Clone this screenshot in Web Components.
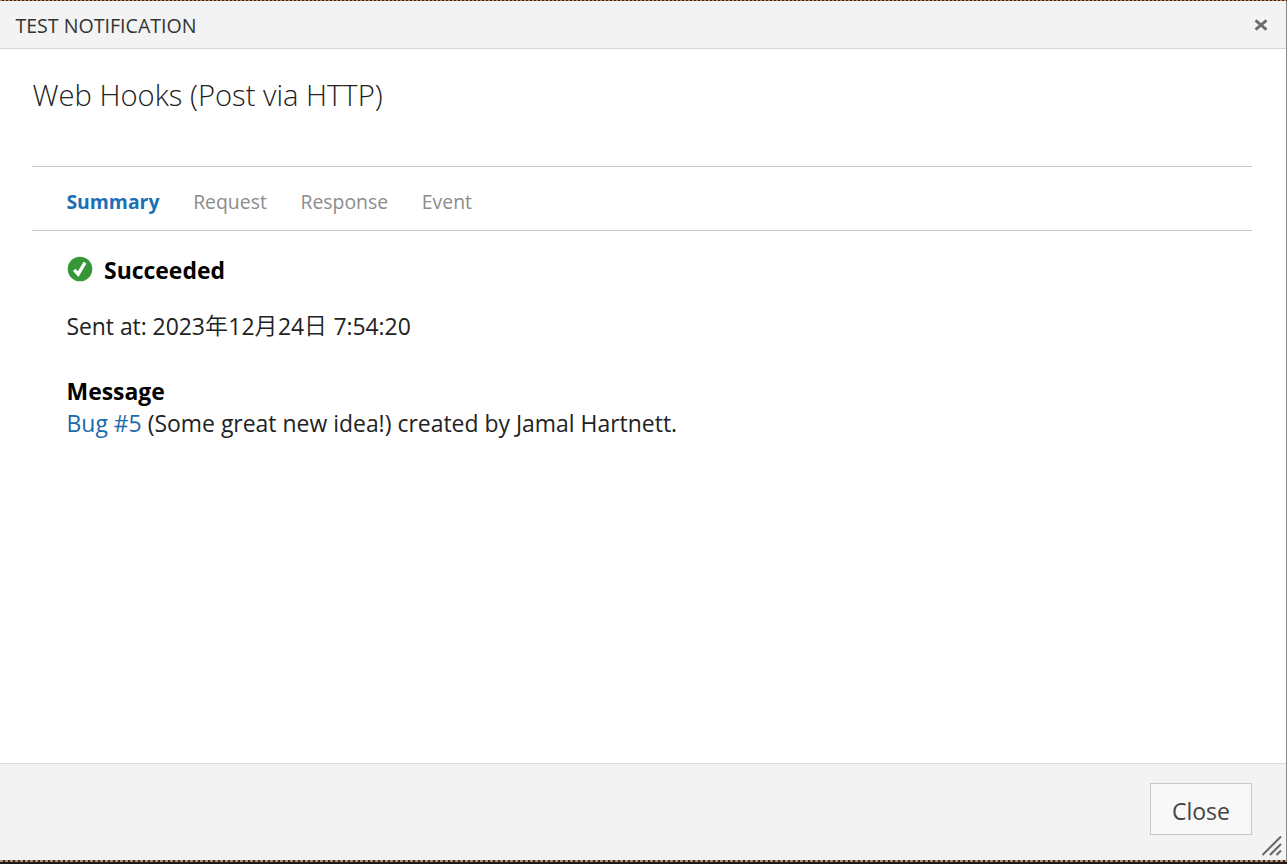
<!DOCTYPE html>
<html lang="en"><head><meta charset="utf-8"><title>Test notification</title>
<style>
html,body{margin:0;height:100%;overflow:hidden;background:#fff}
body{font-family:"Open Sans","Noto Sans CJK JP",sans-serif;color:#333}
a{color:#1c69ac;text-decoration:none}
.jp{font-weight:350;vertical-align:1px;line-height:1;letter-spacing:.5px}
</style></head><body>
<notification-dialog>
<span slot="title">TEST NOTIFICATION</span>
<span slot="heading">Web Hooks (Post via HTTP)</span>
<tab-bar slot="tabs"><tab-item selected>Summary</tab-item><tab-item>Request</tab-item><tab-item>Response</tab-item><tab-item>Event</tab-item></tab-bar>
<result-summary><span slot="status">Succeeded</span><span slot="sent">Sent at: 2023<span class="jp">年</span>12<span class="jp">月</span>24<span class="jp">日</span> 7:54:20</span><span slot="label">Message</span><span slot="message"><a href="#">Bug #5</a> (Some great new idea!) created by Jamal Hartnett.</span></result-summary>
<dialog-button slot="actions">Close</dialog-button>
</notification-dialog>
<script>
const define=(name,html)=>customElements.define(name,class extends HTMLElement{
  constructor(){super();this.attachShadow({mode:'open'}).innerHTML=html;}
});
define('status-icon',`<style>:host{display:block;width:26px;height:26px}svg{display:block}</style>
<svg width="26" height="26" viewBox="0 0 26 26"><circle cx="13" cy="13" r="12.3" fill="#379637"/><path d="M7.2 13.8 L11.2 18.2 L18 6.6" fill="none" stroke="#fff" stroke-width="3.3"/></svg>`);
define('tab-item',`<style>:host{display:block;font-size:19.4px;line-height:30px;color:#8c8c8c}:host([selected]){font-weight:700;color:#1b6fb5}</style><slot></slot>`);
define('tab-bar',`<style>:host{display:flex;gap:33.7px;box-sizing:border-box;height:65px;padding:20px 0 0 34.4px;border-top:1px solid #c8c8c8;border-bottom:1px solid #c8c8c8}</style><slot></slot>`);
define('result-summary',`<style>:host{display:block;padding:23px 0 0 34.5px;font-size:22.95px;line-height:32px;color:#222}
.status{display:flex;gap:11px;margin-bottom:24px;font-weight:700;color:#000}status-icon{margin:2px 0 0 .5px}
.label{margin-top:33px;font-weight:700;color:#000}.label,.sent,.message{height:32px;white-space:nowrap}.sent{letter-spacing:-.05px}</style>
<div class="status"><status-icon></status-icon><slot name="status"></slot></div>
<div class="sent"><slot name="sent"></slot></div><div class="label"><slot name="label"></slot></div><div class="message"><slot name="message"></slot></div>`);
define('dialog-button',`<style>:host{display:block}button{box-sizing:border-box;width:102px;height:52px;margin:0;padding:3px 0 0;border:1px solid #c8c8c8;background:#f8f8f8;color:#444;font:23px/32px "Open Sans",sans-serif}</style><button><slot></slot></button>`);
define('close-icon',`<style>:host{display:block}svg{display:block}</style><svg width="14" height="12" viewBox="0 0 14 12"><path d="M1.5 1.4L12.5 10.6M12.5 1.4L1.5 10.6" stroke="#6c6c6c" stroke-width="2.8" fill="none"/></svg>`);
define('resize-grip',`<style>:host{display:block}svg{display:block}</style><svg width="22" height="22" viewBox="0 0 22 22"><path d="M1.5 20L20 1.5M9 20L20 9M15.5 20L20 15.5" stroke="#666" stroke-width="2" fill="none"/></svg>`);
define('notification-dialog',`<style>
:host{display:flex;flex-direction:column;box-sizing:border-box;width:1287px;height:864px;background:#fff}
.edge-top{height:1px;background:repeating-linear-gradient(90deg,#b98862 0 2px,#3a2414 2px 4px)}
.edge-bottom{height:4px;background:repeating-linear-gradient(90deg,#b09078 0 3px,#3a2a24 3px 5px) 0 0/100% 2px no-repeat,#211a1b}
.window{flex:1;display:flex;flex-direction:column;border-right:1px solid #888}
header{display:flex;justify-content:space-between;box-sizing:border-box;height:48px;padding:9px 18px 0 15.4px;background:#f3f3f3;border-bottom:1px solid #d6d6d6;font-size:19.6px;line-height:32px}
close-icon{margin-top:9px}
main{flex:1;padding:26px 34px 0 32px}
h1{margin:0 0 51px;height:40px;font-size:29.2px;line-height:40px;font-weight:300;color:#222;padding-left:.4px}
footer{position:relative;display:flex;justify-content:flex-end;box-sizing:border-box;height:97px;padding:19px 34px 0;background:#f3f3f3;border-top:1px solid #dcdcdc}
resize-grip{position:absolute;right:3px;bottom:3px}
</style>
<div class="edge-top"></div>
<div class="window"><header><slot name="title"></slot><close-icon></close-icon></header>
<main><h1><slot name="heading"></slot></h1><slot name="tabs"></slot><slot></slot></main>
<footer><slot name="actions"></slot><resize-grip></resize-grip></footer></div>
<div class="edge-bottom"></div>`);
</script></body></html>
